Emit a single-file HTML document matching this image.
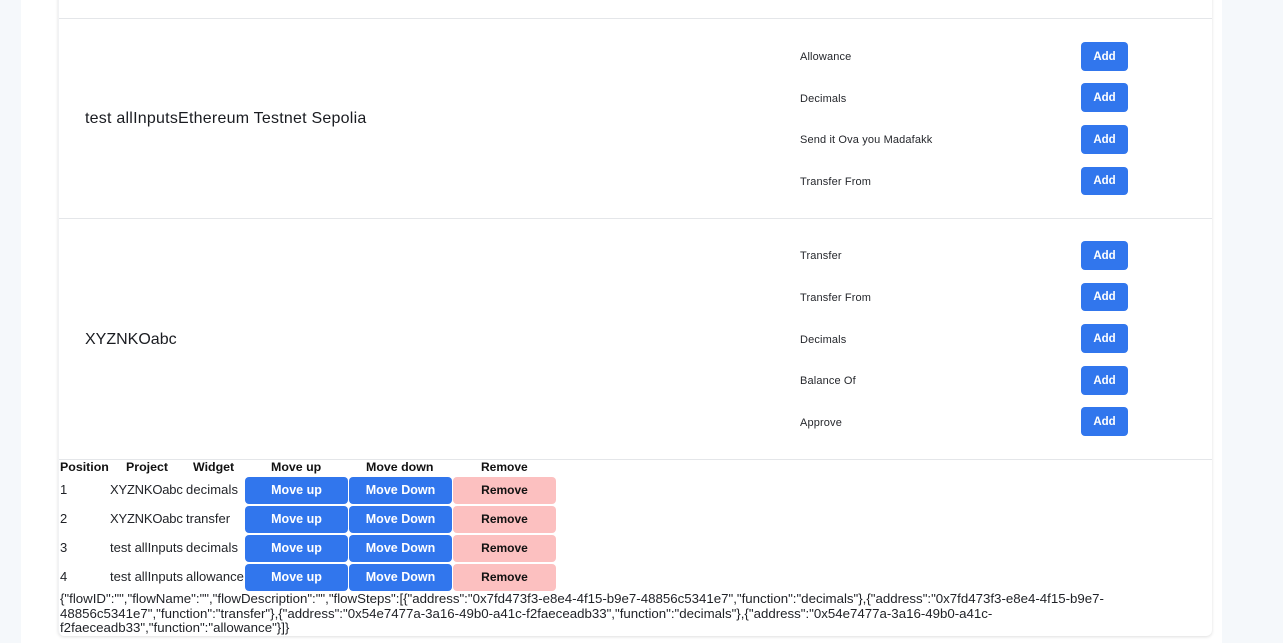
<!DOCTYPE html>
<html><head><meta charset="utf-8"><style>
html,body{margin:0;padding:0;width:1283px;height:643px;overflow:hidden;background:#f5f8fb;font-family:"Liberation Sans",sans-serif;color:#1a1c21}
.a{position:absolute}
#w{left:21px;top:0;width:1201px;height:643px;background:#fff}
#c{left:58px;top:-10px;width:1154px;height:646px;background:#fff;border-radius:0 0 6px 6px;box-shadow:0 1px 3px rgba(0,0,0,.13);border-left:1px solid #f1f2f4;box-sizing:border-box}
.h{left:59px;width:1153px;height:1px;background:#e4e6e9}
.t{white-space:nowrap;line-height:16px;height:16px}
.l{font-size:11px;left:800px;color:#25272c;letter-spacing:.14px;margin-top:1px}
.b{background:#3176ed;color:#fff;font-weight:bold;font-size:11.5px;text-align:center;border-radius:4px;left:1081px;width:47px;height:29px;line-height:30px}
.m{color:#1a1c21;font-size:16px;left:85px}
.th{font-weight:bold;font-size:12.4px;top:459px;color:#111}
.td{font-size:13px;color:#1f2126}
.r{font-weight:bold;font-size:12.5px;text-align:center;border-radius:4px;width:103px;height:27px;line-height:27px;color:#fff;background:#3176ed}
.x{background:#fcc0c0;color:#111;font-size:12px}
.j{left:60px;font-size:13.28px;color:#1f2126;line-height:15px;white-space:nowrap}
</style></head><body>
<div class="a" id="w"></div>
<div class="a" id="c"></div>
<div class="a h" style="top:18px"></div>
<div class="a h" style="top:218px"></div>
<div class="a h" style="top:459px"></div>

<div class="a t m" style="top:111px;letter-spacing:.23px">test allInputsEthereum Testnet Sepolia</div>
<div class="a t m" style="top:332px">XYZNKOabc</div>

<div class="a t l" style="top:48px">Allowance</div>
<div class="a t l" style="top:90px">Decimals</div>
<div class="a t l" style="top:131px">Send it Ova you Madafakk</div>
<div class="a t l" style="top:173px">Transfer From</div>
<div class="a b" style="top:42px">Add</div>
<div class="a b" style="top:83px">Add</div>
<div class="a b" style="top:125px">Add</div>
<div class="a b" style="top:167px;height:28px;line-height:29px">Add</div>

<div class="a t l" style="top:247px">Transfer</div>
<div class="a t l" style="top:289px">Transfer From</div>
<div class="a t l" style="top:331px">Decimals</div>
<div class="a t l" style="top:372px">Balance Of</div>
<div class="a t l" style="top:414px">Approve</div>
<div class="a b" style="top:241px">Add</div>
<div class="a b" style="top:283px;height:28px;line-height:29px">Add</div>
<div class="a b" style="top:324px">Add</div>
<div class="a b" style="top:366px">Add</div>
<div class="a b" style="top:407px">Add</div>

<div class="a t th" style="left:60px">Position</div>
<div class="a t th" style="left:126px">Project</div>
<div class="a t th" style="left:193px">Widget</div>
<div class="a t th" style="left:271px">Move up</div>
<div class="a t th" style="left:366px">Move down</div>
<div class="a t th" style="left:481px;font-size:12px">Remove</div>

<div class="a t td" style="left:60px;top:482px">1</div>
<div class="a t td" style="left:110px;top:482px;letter-spacing:-.2px">XYZNKOabc</div>
<div class="a t td" style="left:186px;top:482px;letter-spacing:.1px">decimals</div>
<div class="a t td" style="left:60px;top:511px">2</div>
<div class="a t td" style="left:110px;top:511px;letter-spacing:-.2px">XYZNKOabc</div>
<div class="a t td" style="left:186px;top:511px">transfer</div>
<div class="a t td" style="left:60px;top:540px">3</div>
<div class="a t td" style="left:110px;top:540px">test allInputs</div>
<div class="a t td" style="left:186px;top:540px;letter-spacing:.1px">decimals</div>
<div class="a t td" style="left:60px;top:569px">4</div>
<div class="a t td" style="left:110px;top:569px">test allInputs</div>
<div class="a t td" style="left:186px;top:569px">allowance</div>

<div class="a r" style="left:245px;top:477px">Move up</div>
<div class="a r" style="left:349px;top:477px">Move Down</div>
<div class="a r x" style="left:453px;top:477px">Remove</div>
<div class="a r" style="left:245px;top:506px">Move up</div>
<div class="a r" style="left:349px;top:506px">Move Down</div>
<div class="a r x" style="left:453px;top:506px">Remove</div>
<div class="a r" style="left:245px;top:535px">Move up</div>
<div class="a r" style="left:349px;top:535px">Move Down</div>
<div class="a r x" style="left:453px;top:535px">Remove</div>
<div class="a r" style="left:245px;top:564px">Move up</div>
<div class="a r" style="left:349px;top:564px">Move Down</div>
<div class="a r x" style="left:453px;top:564px">Remove</div>

<div class="a j" style="top:591px">{"flowID":"","flowName":"","flowDescription":"","flowSteps":[{"address":"0x7fd473f3-e8e4-4f15-b9e7-48856c5341e7","function":"decimals"},{"address":"0x7fd473f3-e8e4-4f15-b9e7-</div>
<div class="a j" style="top:606px">48856c5341e7","function":"transfer"},{"address":"0x54e7477a-3a16-49b0-a41c-f2faeceadb33","function":"decimals"},{"address":"0x54e7477a-3a16-49b0-a41c-</div>
<div class="a j" style="top:620px">f2faeceadb33","function":"allowance"}]}</div>
</body></html>
